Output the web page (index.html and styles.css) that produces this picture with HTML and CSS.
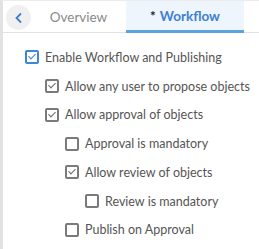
FILE: index.html
```html
<!DOCTYPE html>
<html lang="en">
<head>
    <meta charset="UTF-8">
    <title>Workflow</title>
    <link rel="stylesheet" href="styles.css">
</head>
<body>
    <div class="panel">
        <div class="tabs">
            <button class="back" aria-label="Back">
                <svg width="10" height="12" viewBox="0 0 10 12"><path d="M7 1.5 L2.5 6 L7 10.5" fill="none" stroke="#3d7fd0" stroke-width="1.8"/></svg>
            </button>
            <div class="tab">Overview</div>
            <div class="tab active"><span class="star">*</span> Workflow</div>
        </div>

        <div class="options">
            <label class="opt lvl0 primary"><span class="box checked"></span>Enable Workflow and Publishing</label>
            <label class="opt lvl1"><span class="box checked"></span>Allow any user to propose objects</label>
            <label class="opt lvl1"><span class="box checked"></span>Allow approval of objects</label>
            <label class="opt lvl2"><span class="box"></span>Approval is mandatory</label>
            <label class="opt lvl2"><span class="box checked"></span>Allow review of objects</label>
            <label class="opt lvl3"><span class="box"></span>Review is mandatory</label>
            <label class="opt lvl2"><span class="box"></span>Publish on Approval</label>
        </div>
    </div>
</body>
</html>
```

FILE: styles.css
```css
body {
    margin: 0;
    font-family: Lato, "Open Sans", sans-serif;
    background: #fff;
}
.panel {
    border-left: 3px solid #e2e2e2;
    border-top: 1px solid #ececec;
    height: 248px;
}
.tabs {
    display: flex;
    align-items: stretch;
    height: 31px;
    border-bottom: 1px solid #dfe3e8;
}
.back {
    width: 25px;
    height: 25px;
    margin: 4px 0 0 3px;
    border: none;
    border-radius: 50%;
    background: #f0f0f0;
    padding: 0;
    display: flex;
    align-items: center;
    justify-content: center;
}
.tab {
    font-size: 13.5px;
    color: #8a8a8a;
    display: flex;
    align-items: center;
    justify-content: center;
    padding-top: 1px;
}
.tab:nth-child(2) {
    width: 95px;
}
.tab.active {
    width: 118px;
    background: #eef5fc;
    color: #3d7fd0;
    font-weight: bold;
    border-bottom: 3px solid #5aa3dc;
    height: 29px;
    padding-top: 0;
}
.star {
    color: #222;
    margin-right: 4px;
}
.options {
    padding-top: 10px;
}
.opt {
    display: flex;
    align-items: center;
    height: 28.75px;
    font-size: 12.5px;
    color: #555;
}
.lvl0 { padding-left: 22px; }
.lvl1 { padding-left: 42px; }
.lvl2 { padding-left: 62px; }
.lvl3 { padding-left: 82px; }
.box {
    width: 10px;
    height: 10px;
    border: 2px solid #7a7a7a;
    border-radius: 2px;
    margin-right: 6px;
    position: relative;
    flex: none;
}
.box.checked::after {
    content: "";
    position: absolute;
    left: 3px;
    top: 0px;
    width: 3px;
    height: 6px;
    border: solid #6a6a6a;
    border-width: 0 1.5px 1.5px 0;
    transform: rotate(45deg);
}
.primary .box {
    border-color: #3d86d8;
}
.primary .box.checked::after {
    border-color: #3d86d8;
}
```
